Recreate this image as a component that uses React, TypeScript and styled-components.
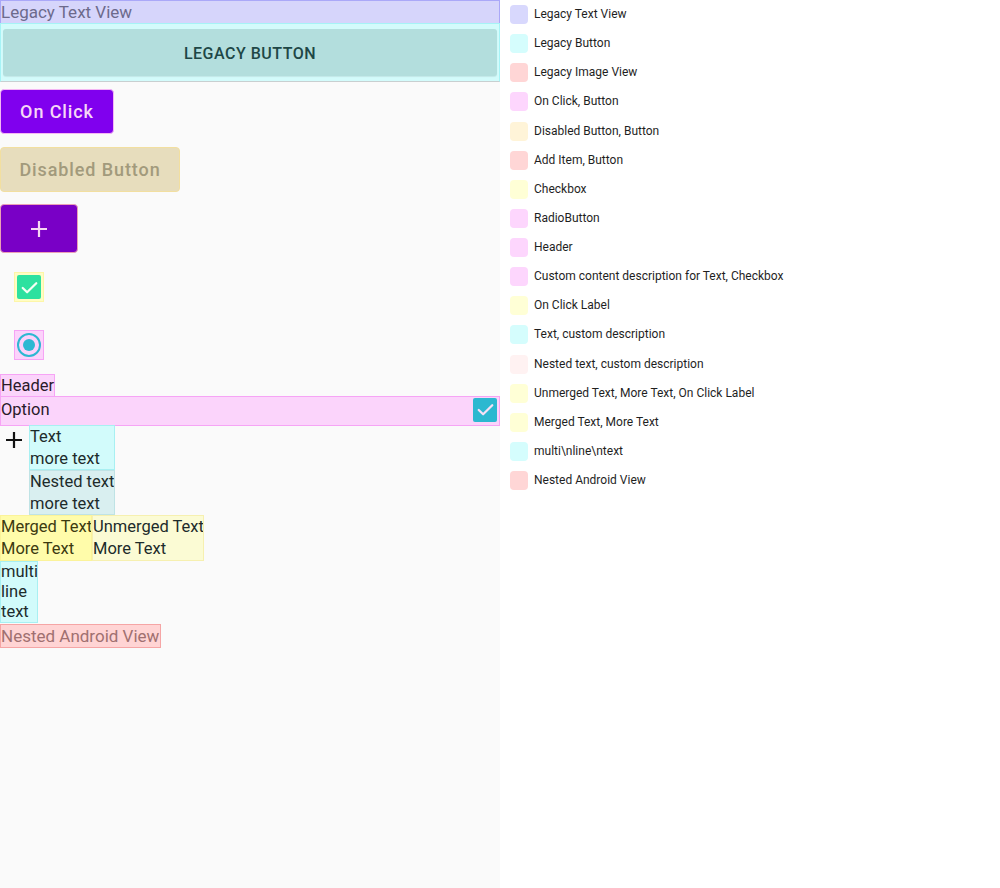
import React from "react";
import styled, { createGlobalStyle } from "styled-components";

const Global = createGlobalStyle`
  html, body { margin: 0; padding: 0; background: #ffffff; }
  body { font-family: Roboto, "Noto Sans", sans-serif; }
  * { box-sizing: border-box; }
`;

const Page = styled.div`
  display: flex;
  width: 1000px;
  height: 888px;
`;

const Device = styled.div`
  width: 500px;
  height: 888px;
  background: #fafafa;
  display: flex;
  flex-direction: column;
  align-items: flex-start;
`;

const Overlay = styled.div<{ $bg: string; $bd: string; $full?: boolean }>`
  background: ${(p) => p.$bg};
  border: 1px solid ${(p) => p.$bd};
  width: ${(p) => (p.$full ? "100%" : "auto")};
`;

const LegacyText = styled(Overlay)`
  height: 24px;
  font-size: 17px;
  line-height: 22px;
  color: #6c6a8c;
`;

const LegacyBtnWrap = styled(Overlay)`
  height: 59px;
  margin-top: -1px;
  padding: 5px 2px 4px 2px;
  border-bottom-color: #c8cfd0;
`;

const LegacyBtn = styled.div`
  height: 47px;
  background: #b3dedd;
  border-radius: 3px;
  display: flex;
  align-items: center;
  justify-content: center;
  font-size: 16px;
  font-weight: 500;
  letter-spacing: 0.5px;
  color: #1e4746;
  padding-top: 2px;
  box-shadow: 0 1px 1px rgba(0, 0, 0, 0.08);
`;

const PillButton = styled.div<{ $bg: string; $fg: string; $bd: string; $w: number; $h: number; $mt: number }>`
  margin-top: ${(p) => p.$mt}px;
  width: ${(p) => p.$w}px;
  height: ${(p) => p.$h}px;
  background: ${(p) => p.$bg};
  color: ${(p) => p.$fg};
  border: 1px solid ${(p) => p.$bd};
  border-radius: 4px;
  display: flex;
  align-items: center;
  justify-content: center;
  font-size: 18px;
  font-weight: 500;
  letter-spacing: 0.9px;
`;

const ControlBox = styled.div<{ $bg: string; $bd: string; $mt: number }>`
  margin-top: ${(p) => p.$mt}px;
  margin-left: 14px;
  width: 30px;
  height: 30px;
  background: ${(p) => p.$bg};
  border: 1px solid ${(p) => p.$bd};
  display: flex;
  align-items: center;
  justify-content: center;
`;

const CheckSquare = styled.div<{ $bg: string; $size: number }>`
  width: ${(p) => p.$size}px;
  height: ${(p) => p.$size}px;
  border-radius: 2px;
  background: ${(p) => p.$bg};
  display: flex;
  align-items: center;
  justify-content: center;
`;

const Radio = styled.div`
  width: 24px;
  height: 24px;
  border-radius: 50%;
  border: 2.5px solid #2db8d2;
  display: flex;
  align-items: center;
  justify-content: center;
  &::after {
    content: "";
    width: 12px;
    height: 12px;
    border-radius: 50%;
    background: #2db8d2;
  }
`;

const HeaderLabel = styled(Overlay)`
  margin-top: 14px;
  height: 23px;
  font-size: 16.5px;
  line-height: 22px;
  color: #2a1a2a;
`;

const OptionRow = styled(Overlay)`
  height: 30px;
  margin-top: -1px;
  display: flex;
  align-items: center;
  justify-content: space-between;
  font-size: 16.5px;
  color: #2a1a2a;
  padding-right: 2px;
  padding-bottom: 3px;
`;

const TextGroup = styled.div`
  display: flex;
  align-items: flex-start;
  margin-top: -1px;
`;

const PlusCell = styled.div`
  width: 29px;
  padding: 5px 0 0 4px;
`;

const Stack = styled.div`
  display: flex;
  flex-direction: column;
`;

const Block = styled.div<{ $bg: string; $bd: string; $w?: number; $lh?: number; $dark?: boolean }>`
  background: ${(p) => p.$bg};
  border: 1px solid ${(p) => p.$bd};
  width: ${(p) => (p.$w ? `${p.$w}px` : "auto")};
  font-size: 16.5px;
  line-height: ${(p) => p.$lh ?? 22}px;
  color: ${(p) => (p.$dark ? "#3c3a10" : "#1d2b2b")};
  white-space: nowrap;
  overflow: hidden;
`;

const Row = styled.div`
  display: flex;
`;

const NestedView = styled(Overlay)`
  margin-top: 1px;
  height: 24px;
  font-size: 17px;
  line-height: 22px;
  color: #a07070;
  padding-right: 1px;
`;

const Legend = styled.div`
  flex: 1;
  background: #ffffff;
  padding: 5px 0 0 10px;
  display: flex;
  flex-direction: column;
`;

const LegendRow = styled.div`
  height: 29.125px;
  display: flex;
  align-items: flex-start;
  gap: 6px;
`;

const Swatch = styled.div<{ $c: string }>`
  width: 18px;
  height: 19px;
  border-radius: 4px;
  background: ${(p) => p.$c};
`;

const LegendText = styled.span`
  font-size: 12px;
  line-height: 19px;
  color: #1f1f1f;
`;

const Check = ({ color, size }: { color: string; size: number }) => (
  <svg width={size} height={size} viewBox="0 0 16 16">
    <path d="M2.3 8.4 L6 12 L13.7 4.4" fill="none" stroke={color} strokeWidth="1.9" strokeLinecap="round" strokeLinejoin="round" />
  </svg>
);

const Plus = ({ color, size, w }: { color: string; size: number; w: number }) => (
  <svg width={size} height={size} viewBox="0 0 20 20">
    <path d="M10 2 V18 M2 10 H18" stroke={color} strokeWidth={w} />
  </svg>
);

const legend: [string, string][] = [
  ["#d8d8fd", "Legacy Text View"],
  ["#d5fdfd", "Legacy Button"],
  ["#ffd6d6", "Legacy Image View"],
  ["#fdd6fd", "On Click, Button"],
  ["#fff4d8", "Disabled Button, Button"],
  ["#ffd6d6", "Add Item, Button"],
  ["#ffffd6", "Checkbox"],
  ["#fdd6fd", "RadioButton"],
  ["#fdd6fd", "Header"],
  ["#fdd6fd", "Custom content description for Text, Checkbox"],
  ["#ffffd6", "On Click Label"],
  ["#d5fdfd", "Text, custom description"],
  ["#fff2f2", "Nested text, custom description"],
  ["#ffffd6", "Unmerged Text, More Text, On Click Label"],
  ["#ffffd6", "Merged Text, More Text"],
  ["#d5fdfd", "multi\\nline\\ntext"],
  ["#ffd6d6", "Nested Android View"],
];

export default function App() {
  return (
    <>
      <Global />
      <Page>
        <Device>
          <LegacyText $bg="#d6d5fb" $bd="#aaa8f8" $full>
            Legacy Text View
          </LegacyText>
          <LegacyBtnWrap $bg="#d3fbfb" $bd="#a6f3f6" $full>
            <LegacyBtn>LEGACY BUTTON</LegacyBtn>
          </LegacyBtnWrap>
          <PillButton $mt={7} $w={114} $h={45} $bg="#8000ee" $fg="#f6d8f6" $bd="#f4b6f4">
            On Click
          </PillButton>
          <PillButton $mt={13} $w={180} $h={45} $bg="#e7ddbd" $fg="#a29a7c" $bd="#f2dfa0">
            Disabled Button
          </PillButton>
          <PillButton $mt={12} $w={78} $h={49} $bg="#7900c6" $fg="#f6d8f6" $bd="#eba0b6">
            <Plus color="#f7d7f3" size={20} w={2.2} />
          </PillButton>
          <ControlBox $mt={19} $bg="#fffdc4" $bd="#fdf6a8">
            <CheckSquare $bg="#2de19f" $size={24}>
              <Check color="#f4fff4" size={19} />
            </CheckSquare>
          </ControlBox>
          <ControlBox $mt={28} $bg="#fcd2fb" $bd="#f6a4f5">
            <Radio />
          </ControlBox>
          <HeaderLabel $bg="#fbd4fb" $bd="#f6a4f5">
            Header
          </HeaderLabel>
          <OptionRow $bg="#fbd4fb" $bd="#f6a4f5" $full>
            <span>Option</span>
            <CheckSquare $bg="#2cb8d0" $size={24}>
              <Check color="#f6e0f6" size={19} />
            </CheckSquare>
          </OptionRow>
          <TextGroup>
            <PlusCell>
              <Plus color="#111111" size={20} w={2.2} />
            </PlusCell>
            <Stack>
              <Block $bg="#d2fbfb" $bd="#a8f0f2" $w={86} $lh={21.5}>
                Text
                <br />
                more text
              </Block>
              <Block $bg="#d9eff0" $bd="#bfe3e5" $w={86} $lh={21.5}>
                Nested text
                <br />
                more text
              </Block>
            </Stack>
          </TextGroup>
          <Row>
            <Block $bg="#fffcaa" $bd="#fbf39a" $w={92} $dark>
              Merged Text
              <br />
              More Text
            </Block>
            <Block $bg="#fbfbd4" $bd="#f6f0b0" $w={112}>
              Unmerged Text
              <br />
              More Text
            </Block>
          </Row>
          <Block $bg="#d2fbfb" $bd="#a8f0f2" $w={38} $lh={20}>
            multi
            <br />
            line
            <br />
            text
          </Block>
          <NestedView $bg="#ffd4d4" $bd="#f5a5a5">
            Nested Android View
          </NestedView>
        </Device>
        <Legend>
          {legend.map(([c, t], i) => (
            <LegendRow key={i}>
              <Swatch $c={c} />
              <LegendText>{t}</LegendText>
            </LegendRow>
          ))}
        </Legend>
      </Page>
    </>
  );
}
